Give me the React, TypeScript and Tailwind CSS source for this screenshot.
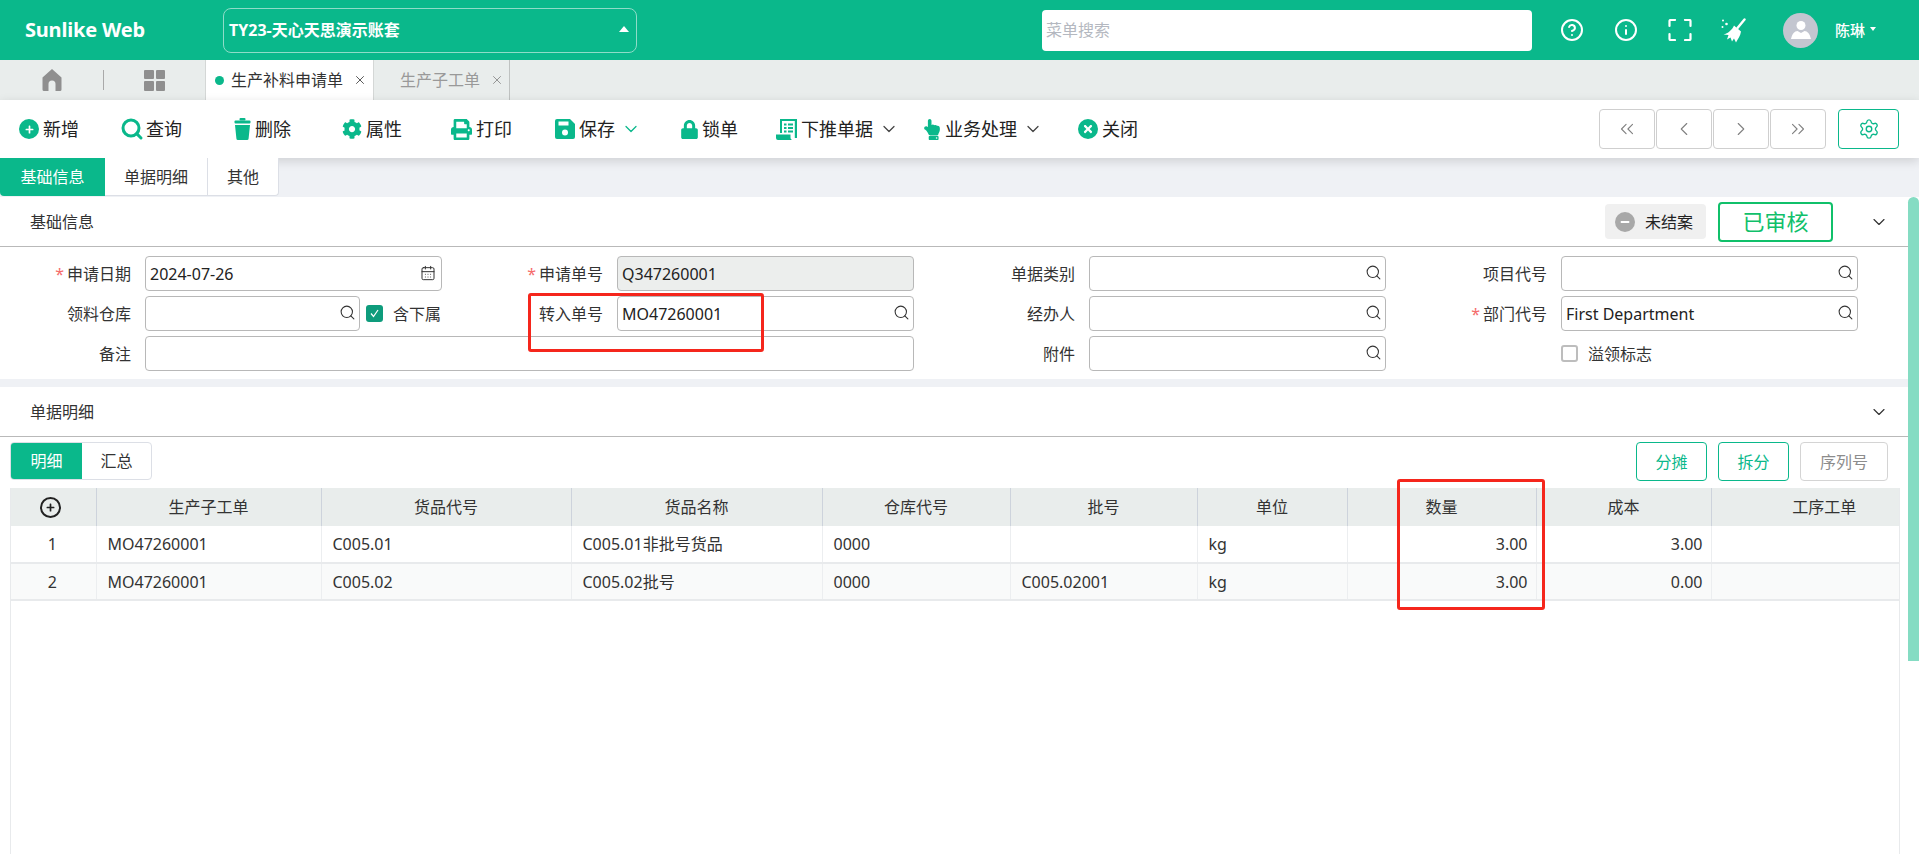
import { CalendarDays, ChevronDown, ChevronLeft, ChevronRight, ChevronsLeft, ChevronsRight, CircleHelp, Info, Search, Settings, X } from "lucide-react";
import type { ReactNode } from "react";
import { FaCog, FaHandPointUp, FaLock, FaMinus, FaPlus, FaPrint, FaTimes } from "react-icons/fa";

const font = { fontFamily: '"Noto Sans", "Noto Sans CJK SC", sans-serif' };

function CircleIcon({ children }: { children: ReactNode }) {
  return (
    <span className="flex size-[20px] items-center justify-center rounded-full bg-[#0ab88b] text-white">{children}</span>
  );
}

function HomeIcon() {
  return (
    <svg width="20" height="22" viewBox="0 0 20 22" fill="#8f8f8f">
      <path d="M10 0 19.500 8.500V20.500a1.500 1.500 0 0 1-1.500 1.500H13.500V15a3.500 3.500 0 0 0-7 0v7H2a1.500 1.500 0 0 1-1.500-1.500V8.500z" />
    </svg>
  );
}

function TrashIcon() {
  return (
    <svg width="17" height="22" viewBox="0 0 17 22" fill="#0ab88b">
      <rect x="5.500" y="0" width="6" height="2.500" rx="1" />
      <rect x="0.500" y="2.500" width="16" height="3" rx="1" />
      <path d="M1 7h15l-1.400 13.400a1.600 1.600 0 0 1-1.600 1.600H4a1.600 1.600 0 0 1-1.600-1.600z" />
    </svg>
  );
}

function SaveIcon() {
  return (
    <svg width="20" height="20" viewBox="0 0 20 20">
      <path d="M2 0h13l5 5v13a2 2 0 0 1-2 2H2a2 2 0 0 1-2-2V2a2 2 0 0 1 2-2z" fill="#0ab88b" />
      <rect x="3.500" y="2.500" width="10" height="4" fill="#fff" />
      <circle cx="10" cy="13.500" r="3" fill="#fff" />
    </svg>
  );
}

function ScrollIcon() {
  return (
    <svg width="21" height="21" viewBox="0 0 21 21" fill="#0ab88b">
      <path d="M4 0h17v19h-2.200V2H6v12H4z" />
      <path d="M0 15.500h14.500v3a2.500 2.500 0 0 0 1.500 2.500H2a2 2 0 0 1-2-2z" />
      <rect x="8" y="4.500" width="2.500" height="2" />
      <rect x="12" y="4.500" width="5" height="2" />
      <rect x="8" y="8" width="2.500" height="2" />
      <rect x="12" y="8" width="5" height="2" />
      <rect x="8" y="11.500" width="2.500" height="2" />
      <rect x="12" y="11.500" width="5" height="2" />
    </svg>
  );
}

function BroomIcon() {
  return (
    <svg width="25" height="25" viewBox="0 0 25 25" fill="#fff">
      <path d="M23.500 1.500 16.500 10" stroke="#fff" strokeWidth="2.400" strokeLinecap="round" />
      <path d="M13 7.500 20 13.500C19.500 17.500 17 21 15 24.500L13 20.500 11 23.500 9.500 19.500 6 21.500 7.500 17 2.500 16.500C7 15.500 11 12 13 7.500z" />
      <circle cx="2" cy="2.500" r="1" />
      <circle cx="5.500" cy="6" r="1.300" />
      <circle cx="1.500" cy="9" r="1" />
    </svg>
  );
}

function FullscreenIcon() {
  return (
    <svg width="24" height="22" viewBox="0 0 24 22" fill="none" stroke="#fff" strokeWidth="2.200" strokeLinecap="round" strokeLinejoin="round">
      <path d="M1.500 7V2a1 1 0 0 1 1-1h4.500M17 1h4.500a1 1 0 0 1 1 1v5M1.500 15v5a1 1 0 0 0 1 1h4.500M17 21h4.500a1 1 0 0 0 1-1v-5" />
    </svg>
  );
}

function Avatar() {
  return (
    <span className="flex size-[35px] items-center justify-center overflow-hidden rounded-full bg-[#c3c6d0]">
      <svg width="24" height="24" viewBox="0 0 24 24" fill="#fff">
        <circle cx="12" cy="7.500" r="4.500" />
        <path d="M8.500 13 12 15l3.500-2c3 .5 5 2 6.500 8H2c1.500-6 3.500-7.500 6.500-8z" />
      </svg>
    </span>
  );
}

const toolbarItems: { icon: ReactNode; label: string; width: string; chevron?: string }[] = [
  { icon: <CircleIcon><FaPlus size={9} /></CircleIcon>, label: "新增", width: "w-[103px]" },
  { icon: <Search size={24} strokeWidth={3} className="-mx-[2px] text-[#0ab88b]" />, label: "查询", width: "w-[112px]" },
  { icon: <TrashIcon />, label: "删除", width: "w-[108px]" },
  { icon: <FaCog size={20} className="text-[#0ab88b]" />, label: "属性", width: "w-[109px]" },
  { icon: <FaPrint size={21} className="text-[#0ab88b]" />, label: "打印", width: "w-[104px]" },
  { icon: <SaveIcon />, label: "保存", width: "w-[126px]", chevron: "text-[#0ab88b]" },
  { icon: <FaLock size={19} className="w-[17px] text-[#0ab88b]" />, label: "锁单", width: "w-[95px]" },
  { icon: <ScrollIcon />, label: "下推单据", width: "w-[147px]", chevron: "text-[#444]" },
  { icon: <FaHandPointUp size={21} className="w-[18px] text-[#0ab88b]" />, label: "业务处理", width: "w-[155px]", chevron: "text-[#444]" },
  { icon: <CircleIcon><FaTimes size={12} /></CircleIcon>, label: "关闭", width: "w-[70px]" },
];

function Field({
  label,
  required,
  value,
  icon = "search",
  disabled,
  className = "",
}: {
  label: string;
  required?: boolean;
  value?: string;
  icon?: "search" | "calendar" | "none";
  disabled?: boolean;
  className?: string;
}) {
  return (
    <div className={`flex h-[35px] items-center ${className}`}>
      <label className="w-[131px] shrink-0 text-right text-[16px] text-[#333]">
        {required ? <span className="mr-[3px] text-[#f56c6c]">*</span> : null}
        {label}
      </label>
      <div
        className={`relative ml-[14px] flex h-full min-w-0 flex-1 items-center rounded-[4px] border border-[#b8b8b8] px-[4px] text-[16px] text-[#222] ${
          disabled ? "bg-[#eceeed]" : "bg-white"
        }`}
      >
        {value}
        {icon === "search" ? (
          <Search size={17} strokeWidth={1.5} className="absolute top-[7px] right-[3px] text-[#333]" />
        ) : null}
        {icon === "calendar" ? (
          <CalendarDays size={16} strokeWidth={1.5} className="absolute top-[8px] right-[5px] text-[#333]" />
        ) : null}
      </div>
    </div>
  );
}

function SectionHeader({ title, children }: { title: string; children?: ReactNode }) {
  return (
    <div className="flex h-[50px] items-center border-b border-[#b9b9b9] pr-[30px] pl-[30px]">
      <span className="text-[16px] text-[#333]">{title}</span>
      <div className="ml-auto flex items-center">
        {children}
        <ChevronDown size={20} strokeWidth={1.4} className="text-[#333]" />
      </div>
    </div>
  );
}

const columns = [
  { title: "", width: "w-[85px]" },
  { title: "生产子工单", width: "w-[225px]" },
  { title: "货品代号", width: "w-[250px]" },
  { title: "货品名称", width: "w-[251px]" },
  { title: "仓库代号", width: "w-[188px]" },
  { title: "批号", width: "w-[187px]" },
  { title: "单位", width: "w-[150px]" },
  { title: "数量", width: "w-[189px]" },
  { title: "成本", width: "w-[175px]" },
  { title: "工序工单", width: "w-[226px]" },
];

const rows = [
  ["1", "MO47260001", "C005.01", "C005.01非批号货品", "0000", "", "kg", "3.00", "3.00", ""],
  ["2", "MO47260001", "C005.02", "C005.02批号", "0000", "C005.02001", "kg", "3.00", "0.00", ""],
];

export default function App() {
  return (
    <div className="relative flex h-[854px] w-full flex-col overflow-hidden bg-[#eff1f5]" style={font}>
      <header className="flex h-[60px] shrink-0 items-center bg-[#0ab88b] text-white">
        <span className="ml-[25px] w-[198px] text-[20px] font-bold tracking-[-0.2px]">Sunlike Web</span>
        <div className="flex h-[45px] w-[414px] items-center justify-between rounded-[8px] border border-[#8fdcc8] pr-[7px] pl-[5px]">
          <span className="text-[16px] font-bold">TY23-天心天思演示账套</span>
          <span className="mt-[-2px] size-0 border-x-[5px] border-b-[6px] border-x-transparent border-b-white" />
        </div>
        <input
          readOnly
          placeholder="菜单搜索"
          className="ml-[405px] h-[41px] w-[490px] rounded-[4px] bg-white px-[4px] text-[16px] outline-none placeholder:text-[#b4b8c0]"
        />
        <div className="ml-[28px] flex w-[44px] justify-start"><CircleHelp size={24} strokeWidth={2} /></div>
        <div className="ml-[10px] flex w-[44px]"><Info size={24} strokeWidth={2} /></div>
        <div className="ml-[10px] flex w-[44px]"><FullscreenIcon /></div>
        <div className="ml-[9px] flex w-[62px]"><BroomIcon /></div>
        <Avatar />
        <span className="ml-[17px] text-[15px] font-medium">陈琳</span>
        <span className="mt-[-2px] ml-[5px] size-0 border-x-[3.500px] border-t-[4px] border-x-transparent border-t-white" />
      </header>

      <nav className="flex h-[40px] shrink-0 items-stretch bg-[#e9edec]">
        <div className="flex w-[103px] items-center justify-center">
          <HomeIcon />
        </div>
        <div className="my-[10px] w-px bg-[#a9a9a9]" />
        <div className="flex w-[101px] items-center justify-center">
          <span className="grid grid-cols-2 gap-[2px]">
            <i className="size-[9.500px] rounded-[1px] bg-[#8f8f8f]" />
            <i className="size-[9.500px] rounded-[1px] bg-[#8f8f8f]" />
            <i className="size-[9.500px] rounded-[1px] bg-[#8f8f8f]" />
            <i className="size-[9.500px] rounded-[1px] bg-[#8f8f8f]" />
          </span>
        </div>
        <div className="flex w-[169px] items-center border-x border-[#d4d7d6] bg-white pl-[9px] text-[16px] text-[#333]">
          <span className="mr-[7px] size-[9px] rounded-full bg-[#0ab88b]" />
          生产补料申请单
          <X size={14} strokeWidth={1.5} className="ml-[10px] text-[#444]" />
        </div>
        <div className="flex w-[136px] items-center border-r border-[#bfc2c1] pl-[26px] text-[16px] text-[#999]">
          生产子工单
          <X size={14} strokeWidth={1.5} className="ml-[10px] text-[#888]" />
        </div>
      </nav>

      <div className="relative flex h-[58px] shrink-0 items-center bg-white pr-[20px] pl-[19px] shadow-[0_3px_10px_rgba(0,0,0,0.14)]">
        {toolbarItems.map((item) => (
          <div key={item.label} className={`flex items-center ${item.width}`}>
            {item.icon}
            <span className="ml-[4px] text-[18px] text-[#222]">{item.label}</span>
            {item.chevron ? (
              <ChevronDown size={20} strokeWidth={1.5} className={`ml-[6px] ${item.chevron}`} />
            ) : null}
          </div>
        ))}
        <div className="ml-auto flex gap-[1px] text-[#808080]">
          {[ChevronsLeft, ChevronLeft, ChevronRight, ChevronsRight].map((Icon, i) => (
            <button
              key={i}
              className="flex h-[40px] w-[56px] items-center justify-center rounded-[4px] border border-[#cfcfcf] bg-white"
            >
              <Icon size={22} strokeWidth={1.2} />
            </button>
          ))}
        </div>
        <button className="ml-[12px] flex h-[40px] w-[61px] items-center justify-center rounded-[4px] border border-[#0ab88b] text-[#0ab88b]">
          <Settings size={22} strokeWidth={1.5} />
        </button>
      </div>

      <div className="relative flex h-[38px] shrink-0 items-stretch text-[16px] text-[#333]">
        <div className="flex w-[105px] items-center justify-center rounded-bl-[4px] bg-[#0ab88b] text-white">基础信息</div>
        <div className="flex w-[102px] items-center justify-center border-b border-[#dcdfe6] bg-white">单据明细</div>
        <div className="flex w-[72px] items-center justify-center rounded-br-[4px] border-x border-b border-[#dcdfe6] bg-white">其他</div>
      </div>

      <section className="mt-px shrink-0 bg-white pb-[8px]">
        <SectionHeader title="基础信息">
          <div className="flex h-[35px] w-[101px] items-center rounded-[4px] bg-[#f0f0f0] pl-[10px]">
            <span className="flex size-[20px] items-center justify-center rounded-full bg-[#a8a8a8] text-white">
              <FaMinus size={10} />
            </span>
            <span className="ml-[10px] text-[16px] text-[#222]">未结案</span>
          </div>
          <div className="mr-[36px] ml-[12px] flex h-[40px] w-[115px] items-center justify-center rounded-[4px] border-2 border-[#10c06a] text-[22px] text-[#10c06a]">
            已审核
          </div>
        </SectionHeader>
        <div className="mt-[9px] grid grid-cols-[repeat(4,472px)] gap-y-[5px]">
          <Field label="申请日期" required value="2024-07-26" icon="calendar" className="pr-[30px]" />
          <Field label="申请单号" required value="Q347260001" icon="none" disabled className="pr-[30px]" />
          <Field label="单据类别" className="pr-[30px]" />
          <Field label="项目代号" className="pr-[30px]" />

          <div className="flex h-[35px] items-center">
            <Field label="领料仓库" className="w-[360px]" />
            <span className="ml-[6px] flex size-[17px] items-center justify-center rounded-[3px] bg-[#0e9c7c]">
              <svg width="11" height="11" viewBox="0 0 11 11" fill="none" stroke="#fff" strokeWidth="1.200">
                <path d="M2 5.500 4.500 8.500 9 2" />
              </svg>
            </span>
            <span className="ml-[10px] text-[16px] text-[#333]">含下属</span>
          </div>
          <Field label="转入单号" value="MO47260001" className="pr-[30px]" />
          <Field label="经办人" className="pr-[30px]" />
          <Field label="部门代号" required value="First Department" className="pr-[30px]" />

          <Field label="备注" icon="none" className="col-span-2 pr-[30px]" />
          <Field label="附件" className="pr-[30px]" />
          <div className="flex h-[35px] items-center pl-[145px]">
            <span className="size-[17px] rounded-[3px] border-2 border-[#bdbdbd] bg-white" />
            <span className="ml-[10px] text-[16px] text-[#333]">溢领标志</span>
          </div>
        </div>
      </section>

      <section className="mt-[8px] flex min-h-0 flex-1 flex-col bg-white">
        <SectionHeader title="单据明细" />
        <div className="flex h-[51px] shrink-0 items-start pt-[5px] pr-[31px] pl-[10px] text-[16px]">
          <div className="flex h-[38px] overflow-hidden rounded-[4px] border border-[#dcdfe6]">
            <span className="flex w-[71px] items-center justify-center bg-[#0ab88b] text-white">明细</span>
            <span className="flex w-[69px] items-center justify-center text-[#333]">汇总</span>
          </div>
          <button className="ml-auto flex h-[39px] w-[71px] items-center justify-center rounded-[4px] border border-[#0ab88b] text-[#0ab88b]">分摊</button>
          <button className="ml-[11px] flex h-[39px] w-[71px] items-center justify-center rounded-[4px] border border-[#0ab88b] text-[#0ab88b]">拆分</button>
          <button className="ml-[11px] flex h-[39px] w-[88px] items-center justify-center rounded-[4px] border border-[#d4d4d4] text-[#8c8c8c]">序列号</button>
        </div>
        <div className="mx-[10px] mr-[19px] min-h-0 flex-1 overflow-hidden border-x border-[#e8eaec]">
          <table className="w-[1926px] table-fixed border-collapse text-[16px] text-[#333]">
            <thead>
              <tr className="h-[38px] bg-[#e9edec]">
                {columns.map((col, i) => (
                  <th key={i} className={`${col.width} border-r border-[#cdd3dc] py-0 font-normal last:border-r-0`}>
                    {i === 0 ? (
                      <span className="flex justify-center pr-[5px]">
                        <span className="flex size-[21px] items-center justify-center rounded-full border-2 border-[#222] text-[#222]">
                          <FaPlus size={9} />
                        </span>
                      </span>
                    ) : (
                      col.title
                    )}
                  </th>
                ))}
              </tr>
            </thead>
            <tbody>
              {rows.map((row, r) => (
                <tr key={r} className={`h-[37px] border-b-2 border-[#e8eaec] ${r === 1 ? "bg-[#f9fafa]" : "bg-white"}`}>
                  {row.map((cell, c) => (
                    <td
                      key={c}
                      className={`border-r border-[#eceef0] py-0 last:border-r-0 ${
                        c === 0 ? "pr-[2px] text-center" : c === 7 || c === 8 ? "pr-[8px] text-right" : "pl-[11px]"
                      }`}
                    >
                      {cell}
                    </td>
                  ))}
                </tr>
              ))}
            </tbody>
          </table>
        </div>
      </section>

      <div className="absolute top-[197px] right-0 h-[464px] w-[11px] rounded-t-[6px] bg-[#85dcc3]" />
      <div className="absolute top-[293px] left-[528px] h-[59px] w-[236px] rounded-[3px] border-[3px] border-[#f5261c]" />
      <div className="absolute top-[479px] left-[1397px] h-[131px] w-[148px] rounded-[3px] border-[3px] border-[#f5261c]" />
    </div>
  );
}
